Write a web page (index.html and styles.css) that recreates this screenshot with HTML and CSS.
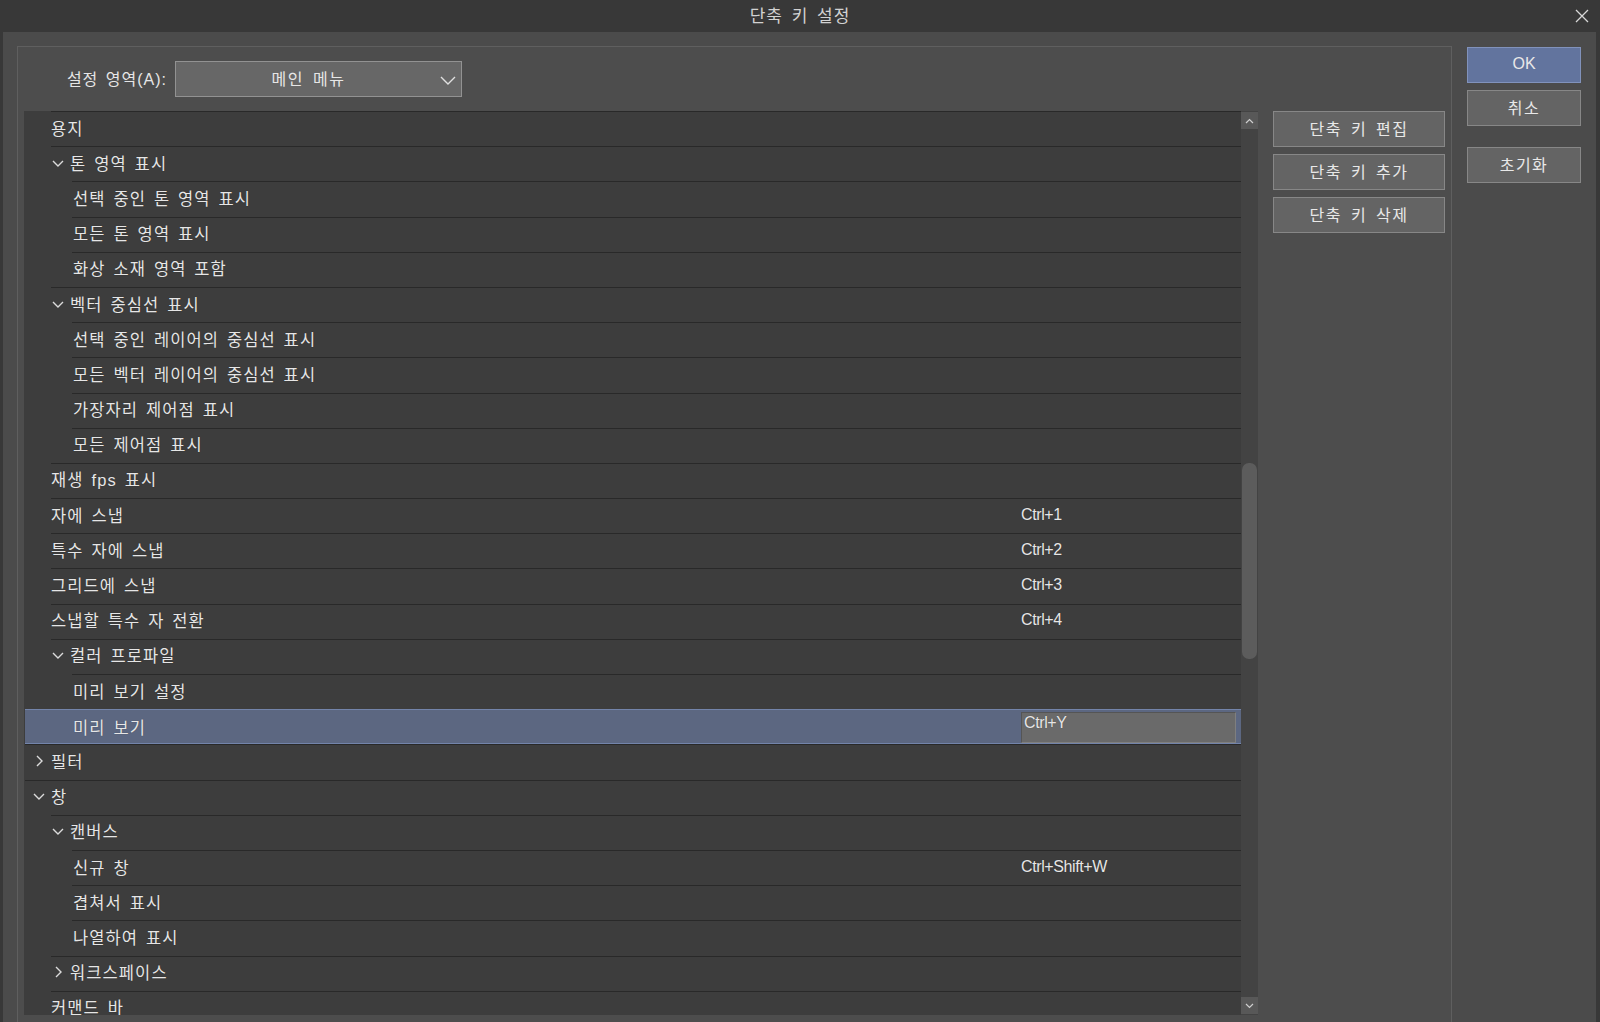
FILE: index.html
```html
<!DOCTYPE html>
<html lang="ko">
<head>
<meta charset="utf-8">
<title>단축 키 설정</title>
<link rel="stylesheet" href="styles.css">
</head>
<body>
<div class="window">
  <div class="titlebar">
    <span class="title">단축 키 설정</span>
    <svg class="close" width="14" height="14" viewBox="0 0 14 14"><path d="M1 1 L13 13 M13 1 L1 13" stroke="#d8d8d8" stroke-width="1.3" fill="none"/></svg>
  </div>
  <div class="panel">
    <div class="group">
      <div class="area-row">
        <label class="area-label">설정 영역(A):</label>
        <div class="combo">
          <span class="combo-text">메인 메뉴</span>
          <svg class="combo-arrow" width="16" height="9" viewBox="0 0 16 9"><path d="M1 1 L8 8 L15 1" stroke="#e0e0e0" stroke-width="1.4" fill="none"/></svg>
        </div>
      </div>
      <div class="content-row">
        <div class="list">
          <div class="rows">
            <div class="row l1"><span class="name leaf">용지</span></div>
            <div class="row l1"><span class="name"><svg class="chev" viewBox="0 0 14 14"><path d="M2 5 L7 10 L12 5"/></svg>톤 영역 표시</span></div>
            <div class="row l2"><span class="name leaf">선택 중인 톤 영역 표시</span></div>
            <div class="row l2"><span class="name leaf">모든 톤 영역 표시</span></div>
            <div class="row l2"><span class="name leaf">화상 소재 영역 포함</span></div>
            <div class="row l1"><span class="name"><svg class="chev" viewBox="0 0 14 14"><path d="M2 5 L7 10 L12 5"/></svg>벡터 중심선 표시</span></div>
            <div class="row l2"><span class="name leaf">선택 중인 레이어의 중심선 표시</span></div>
            <div class="row l2"><span class="name leaf">모든 벡터 레이어의 중심선 표시</span></div>
            <div class="row l2"><span class="name leaf">가장자리 제어점 표시</span></div>
            <div class="row l2"><span class="name leaf">모든 제어점 표시</span></div>
            <div class="row l1"><span class="name leaf">재생 fps 표시</span></div>
            <div class="row l1"><span class="name leaf">자에 스냅</span><span class="key">Ctrl+1</span></div>
            <div class="row l1"><span class="name leaf">특수 자에 스냅</span><span class="key">Ctrl+2</span></div>
            <div class="row l1"><span class="name leaf">그리드에 스냅</span><span class="key">Ctrl+3</span></div>
            <div class="row l1"><span class="name leaf">스냅할 특수 자 전환</span><span class="key">Ctrl+4</span></div>
            <div class="row l1"><span class="name"><svg class="chev" viewBox="0 0 14 14"><path d="M2 5 L7 10 L12 5"/></svg>컬러 프로파일</span></div>
            <div class="row l2"><span class="name leaf">미리 보기 설정</span></div>
            <div class="row l2 selected"><span class="name leaf">미리 보기</span><span class="key-edit">Ctrl+Y</span></div>
            <div class="row l0"><span class="name"><svg class="chev" viewBox="0 0 14 14"><path d="M5 2 L10 7 L5 12"/></svg>필터</span></div>
            <div class="row l0"><span class="name"><svg class="chev" viewBox="0 0 14 14"><path d="M2 5 L7 10 L12 5"/></svg>창</span></div>
            <div class="row l1"><span class="name"><svg class="chev" viewBox="0 0 14 14"><path d="M2 5 L7 10 L12 5"/></svg>캔버스</span></div>
            <div class="row l2"><span class="name leaf">신규 창</span><span class="key">Ctrl+Shift+W</span></div>
            <div class="row l2"><span class="name leaf">겹쳐서 표시</span></div>
            <div class="row l2"><span class="name leaf">나열하여 표시</span></div>
            <div class="row l1"><span class="name"><svg class="chev" viewBox="0 0 14 14"><path d="M5 2 L10 7 L5 12"/></svg>워크스페이스</span></div>
            <div class="row l1"><span class="name leaf">커맨드 바</span></div>
          </div>
          <div class="scrollbar">
            <div class="sb-btn"><svg width="9" height="6" viewBox="0 0 9 6"><path d="M1 5 L4.5 1.5 L8 5" stroke="#cfcfcf" stroke-width="1.2" fill="none"/></svg></div>
            <div class="sb-track"><div class="sb-thumb"></div></div>
            <div class="sb-btn"><svg width="9" height="6" viewBox="0 0 9 6"><path d="M1 1 L4.5 4.5 L8 1" stroke="#cfcfcf" stroke-width="1.2" fill="none"/></svg></div>
          </div>
        </div>
        <div class="side-buttons">
          <button class="btn">단축 키 편집</button>
          <button class="btn">단축 키 추가</button>
          <button class="btn">단축 키 삭제</button>
        </div>
      </div>
    </div>
    <div class="dialog-buttons">
      <button class="btn ok">OK</button>
      <button class="btn">취소</button>
      <button class="btn reset">초기화</button>
    </div>
  </div>
</div>
</body>
</html>
```

FILE: styles.css
```css
* { box-sizing: border-box; }
html, body {
  margin: 0;
  padding: 0;
  width: 1600px;
  height: 1022px;
  overflow: hidden;
  background: #383838;
  font-family: "Liberation Sans", "Noto Sans CJK KR", sans-serif;
  font-size: 16px;
  color: #e6e6e6;
}
.window {
  display: flex;
  flex-direction: column;
  height: 1022px;
}
.titlebar {
  height: 32px;
  flex: 0 0 32px;
  display: flex;
  align-items: center;
  justify-content: center;
  position: relative;
  background: #383838;
  padding-bottom: 3px;
}
.title {
  color: #d2d2d2;
  font-size: 17px;
  letter-spacing: 1px;
  word-spacing: 3px;
}
.close {
  position: absolute;
  right: 11px;
  top: 9px;
}
.panel {
  flex: 1;
  margin: 0 4px 0 3px;
  background: #4b4b4b;
  display: flex;
  padding: 14px 15px 0 14px;
  gap: 15px;
  overflow: hidden;
}
.group {
  width: 1435px;
  flex: 0 0 1435px;
  border: 1px solid #5f5f5f;
  border-bottom: none;
  background: #4d4d4d;
  display: flex;
  flex-direction: column;
}
.area-row {
  display: flex;
  align-items: center;
  padding-top: 14px;
  height: 50px;
  margin-bottom: 14px;
}
.area-label {
  width: 157px;
  text-align: right;
  padding-right: 8px;
  padding-bottom: 2px;
  font-size: 16px;
  letter-spacing: 1px;
  word-spacing: 2px;
  color: #e6e6e6;
}
.combo {
  width: 287px;
  height: 36px;
  background: #676767;
  border: 1px solid #929292;
  display: flex;
  align-items: center;
  position: relative;
}
.combo-text {
  flex: 1;
  text-align: center;
  padding-right: 20px;
  padding-bottom: 2px;
  letter-spacing: 1.5px;
  word-spacing: 3px;
}
.combo-arrow {
  position: absolute;
  right: 5px;
  top: 14px;
}
.content-row {
  display: flex;
  gap: 15px;
  padding: 0 6px;
}
.list {
  width: 1234px;
  height: 904px;
  display: flex;
  background: #3d3d3d;
  overflow: hidden;
}
.rows {
  flex: 1;
  display: flex;
  flex-direction: column;
}
.row {
  flex: 0 0 35.2px;
  height: 35.2px;
  display: grid;
  grid-template-columns: 997px 1fr;
  align-items: center;
  padding-bottom: 2px;
  background-image: linear-gradient(#292929, #292929);
  background-repeat: no-repeat;
  background-position: right top;
  font-size: 16.5px;
  letter-spacing: 1.1px;
  word-spacing: 2.2px;
  white-space: nowrap;
  text-shadow: 0 0 1px rgba(0, 0, 0, 0.35);
}
.row.l0 { background-size: calc(100% - 1px) 1px; }
.row.l1 { background-size: calc(100% - 27px) 1px; }
.row.l2 { background-size: calc(100% - 48px) 1px; }
.row.l0 .name { padding-left: 8px; }
.row.l1 .name { padding-left: 27px; }
.row.l2 .name { padding-left: 48px; }
.row.l2 .name.leaf { padding-left: 49px; }
.name {
  display: flex;
  align-items: center;
}
.chev {
  width: 14px;
  height: 14px;
  margin-right: 5px;
  flex: 0 0 14px;
  fill: none;
  stroke: #dcdcdc;
  stroke-width: 1.4;
}
.key {
  letter-spacing: -0.4px;
  font-size: 16px;
  word-spacing: 0;
}
.row.selected {
  background: #5c6781;
  border-top: 1px solid #7384aa;
  border-bottom: 1px solid #7384aa;
  margin-left: 1px;
  padding-bottom: 2px;
}
.row.selected .name.leaf { padding-left: 48px; }
.row.selected { grid-template-columns: 996px 1fr; }
.key-edit {
  display: block;
  width: 215px;
  height: 31px;
  background: #6a6a6a;
  border: 1px solid #7f7f7f;
  border-top-color: #555;
  border-left-color: #555;
  padding: 0 2px;
  line-height: 20px;
  font-size: 16px;
  letter-spacing: -0.4px;
  align-self: center;
  margin-top: 2px;
}
.scrollbar {
  width: 17px;
  flex: 0 0 17px;
  background: #434343;
  display: flex;
  flex-direction: column;
}
.sb-btn {
  height: 17px;
  flex: 0 0 17px;
  background: #585858;
  display: flex;
  align-items: center;
  justify-content: center;
}
.sb-btn:first-child { margin-top: 1px; }
.sb-btn:last-child { margin-bottom: 1px; }
.sb-track {
  flex: 1;
  padding: 334px 1px 0 1px;
}
.sb-thumb {
  height: 196px;
  background: #5c5c5c;
  border-radius: 7px;
}
.side-buttons {
  width: 172px;
  display: flex;
  flex-direction: column;
  gap: 7px;
}
.btn {
  height: 36px;
  background: #646464;
  border: 1px solid #878787;
  color: #e8e8e8;
  font-family: "Liberation Sans", "Noto Sans CJK KR", sans-serif;
  font-size: 16px;
  letter-spacing: 1.5px;
  word-spacing: 3px;
  padding: 0 0 2px 0;
}
.dialog-buttons {
  width: 114px;
  flex: 0 0 114px;
  display: flex;
  flex-direction: column;
  gap: 7px;
  padding-top: 1px;
}
.btn.ok {
  background: #62749e;
  border-color: #8192bb;
  letter-spacing: 0;
}
.btn.reset { margin-top: 14px; }
```
